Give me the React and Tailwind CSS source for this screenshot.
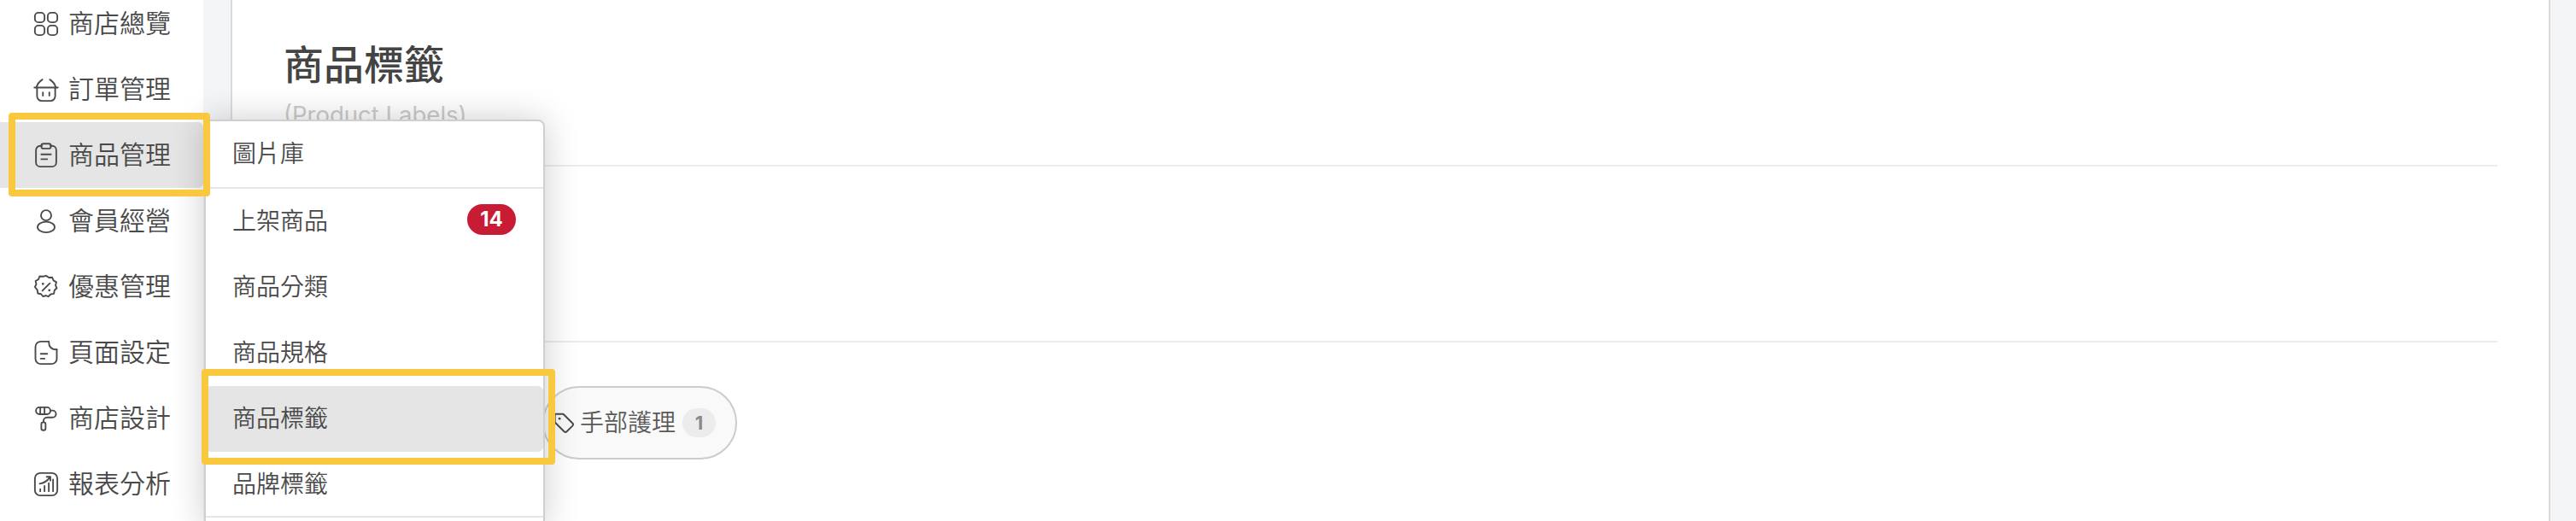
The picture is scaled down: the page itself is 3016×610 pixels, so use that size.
const font = { fontFamily: '"Noto Sans CJK TC", "Noto Sans CJK SC", sans-serif' };

function Ico({ children }) {
  return (
    <svg width="30" height="30" viewBox="0 0 24 24" fill="none" stroke="#4a4a4a" strokeWidth="1.5" strokeLinecap="round" strokeLinejoin="round" className="shrink-0">
      {children}
    </svg>
  );
}

const icons = [
  <Ico>
    <rect x="1.5" y="1.5" width="9" height="9" rx="3.2" />
    <rect x="13.5" y="1.5" width="9" height="9" rx="3.2" />
    <rect x="1.5" y="13.5" width="9" height="9" rx="3.2" />
    <rect x="13.5" y="13.5" width="9" height="9" rx="3.2" />
  </Ico>,
  <Ico>
    <path d="M1 10h22" />
    <path d="M3 10c.5-3 2.500-5.500 5.500-7.500M21 10c-.5-3-2.500-5.500-5.500-7.500" />
    <path d="M3.500 10v8a4.500 4.500 0 0 0 4.500 4.500h8a4.500 4.500 0 0 0 4.500-4.500v-8" />
    <path d="M9 14.500v3M15 14.500v3" />
  </Ico>,
  <Ico>
    <path d="M8 3H6.500a4 4 0 0 0-4 4v11.500a4 4 0 0 0 4 4h11a4 4 0 0 0 4-4V7a4 4 0 0 0-4-4H16" />
    <rect x="7.500" y="1" width="9" height="4.500" rx="2" />
    <path d="M7.500 11h9M7.500 15.500h5.500" />
  </Ico>,
  <Ico>
    <circle cx="12" cy="6.500" r="4.800" />
    <ellipse cx="12" cy="17.500" rx="8" ry="5" />
  </Ico>,
  <Ico>
    <path d="M12 1.500l2.600 1.700 3.100-.2 1.200 2.900 2.700 1.600-.8 3 1.200 2.500-2.200 2.200-.5 3.100-3 .5-2.300 2.200-2-1-2.800.9-2-2.300-3-.6-.4-3.100L1.500 12l1.300-2.600-.7-3 2.700-1.500 1.100-2.900 3.100.2z" />
    <path d="M15.500 8.500l-7 7" />
    <path d="M9 9h.01M15 15h.01" strokeWidth="2.200" />
  </Ico>,
  <Ico>
    <path d="M14.500 1.500H7a5 5 0 0 0-5 5v11a5 5 0 0 0 5 5h10a5 5 0 0 0 5-5V9" />
    <path d="M14.500 1.500c0 4.500 2.500 7.500 7.500 7.500" />
    <path d="M7 13h6M7 17.500h3.500" />
  </Ico>,
  <Ico>
    <rect x="2.500" y="1.500" width="13.500" height="6.500" rx="3.200" />
    <path d="M6.500 1.500v6.500M10.500 1.500v6.500" />
    <path d="M16 4.500h2a2.800 2.800 0 0 1 0 6.500h-5a3.500 3.500 0 0 0-3.500 3.500v1" />
    <rect x="7.500" y="15.500" width="4" height="7.500" rx="1.800" />
  </Ico>,
  <Ico>
    <rect x="1.500" y="1.500" width="21" height="21" rx="5" />
    <path d="M6.500 18.500v-2M10.500 18.500v-5M14.500 18.500v-7.500M18.500 18.500v-11" />
    <path d="M6 11.500c3.500-.5 7-2.500 9.500-6M12.500 5h3.500v3.500" />
  </Ico>,
];

const sideItems = ["商店總覽", "訂單管理", "商品管理", "會員經營", "優惠管理", "頁面設定", "商店設計", "報表分析"];

function Sidebar() {
  return (
    <div className="w-[238px] shrink-0 -mt-[11px]">
      {sideItems.map((label, i) => (
        <div
          key={label}
          className={`h-[77px] flex items-center gap-[11px] pl-[39px] text-[30px] text-[#4a4a4a] rounded-r-md ${i === 2 ? "bg-[#e5e5e5]" : ""}`}
        >
          {icons[i]}
          <span className="leading-none -translate-y-[3px] font-[350]">{label}</span>
        </div>
      ))}
    </div>
  );
}

const subItems = ["上架商品", "商品分類", "商品規格", "商品標籤", "品牌標籤"];

function SubMenu() {
  return (
    <div className="absolute left-[239px] top-[140px] w-[399px] h-[480px] bg-white border-2 border-[#cfcfcf] rounded-lg shadow-[0_0_40px_rgba(0,0,0,0.2)] text-[28px] text-[#4a4a4a] font-[350]">
      <div className="h-[79px] flex items-center pl-[31px] pb-[6px] border-b-2 border-[#e6e6e6]">圖片庫</div>
      {subItems.map((label, i) => (
        <div
          key={label}
          className={`h-[77px] flex items-center justify-between pl-[31px] pr-[32px] ${i === 3 ? "bg-[#e5e5e5] rounded-md" : ""}`}
        >
          <span className="-translate-y-[3px]">{label}</span>
          {i === 0 && (
            <span className="w-[57px] h-[36px] -translate-y-[3px] rounded-full bg-[#c81c34] text-white text-[24px] font-bold flex items-center justify-center leading-none" style={{ fontFamily: "Inter, sans-serif" }}>
              14
            </span>
          )}
        </div>
      ))}
      <div className="h-[2px] bg-[#e6e6e6] -mt-[2px]" />
    </div>
  );
}

function TagPill() {
  return (
    <div className="inline-flex items-center h-[86px] pl-[10px] pr-[23px] rounded-full bg-[#f9f9f9] border-2 border-[#cccccc] text-[28px] text-[#5a5a5a] font-[350]">
      <svg width="26" height="26" viewBox="0 0 24 24" fill="none" stroke="#4a4a4a" strokeWidth="1.8" strokeLinejoin="round" strokeLinecap="round" className="shrink-0 mr-[6px]">
        <path d="M3 2.500h8.500l10 10a2 2 0 0 1 0 2.800l-6.200 6.200a2 2 0 0 1-2.800 0l-10-10V4a1.500 1.500 0 0 1 .5-1.500z" />
        <path d="M7.500 7.500h.01" strokeWidth="2.600" />
      </svg>
      <span className="-translate-y-[2px]">手部護理</span>
      <span className="ml-[8px] w-[39px] h-[34px] rounded-full bg-[#ececec] text-[#8a8a8a] text-[22px] font-bold flex items-center justify-center leading-none" style={{ fontFamily: "Inter, sans-serif" }}>
        1
      </span>
    </div>
  );
}

export default function App() {
  return (
    <div className="relative w-[3016px] h-[610px] overflow-hidden flex bg-[#f4f5f7]" style={font}>
      <div className="absolute left-0 top-0 bottom-0 w-[238px] bg-white" />
      <div className="relative flex">
        <Sidebar />
      </div>

      {/* content panel */}
      <div className="relative ml-[32px] w-[2716px] h-[610px] bg-white border-x-2 border-[#dcdcdc] pl-[60px] pr-[60px] shrink-0">
        <div className="h-[195px] border-b-2 border-[#ececec]">
          <h1 className="text-[47px] font-medium text-[#444444] leading-none pt-[49px]">商品標籤</h1>
          <p className="text-[27.5px] text-[#cccccc] leading-none mt-[25px]" style={{ fontFamily: "Inter, sans-serif" }}>(Product Labels)</p>
        </div>
        <div className="h-[206px] border-b-2 border-[#ececec]" />
        <div className="pt-[51px] pl-[303px]">
          <TagPill />
        </div>
      </div>

      <SubMenu />

      {/* yellow annotation boxes */}
      <div className="absolute left-[10px] top-[132px] w-[236px] h-[98px] border-8 border-[#f8c93f] rounded-[4px]" />
      <div className="absolute left-[236px] top-[432px] w-[414px] h-[112px] border-8 border-[#f8c93f] rounded-[4px]" />
    </div>
  );
}
